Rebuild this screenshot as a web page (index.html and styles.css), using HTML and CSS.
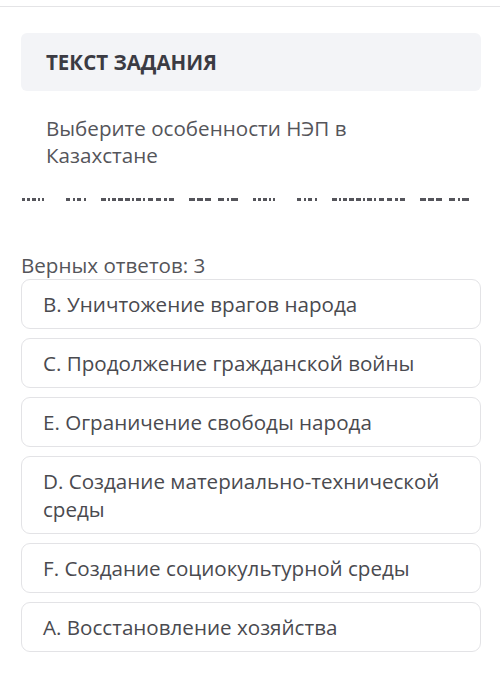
FILE: index.html
```html
<!DOCTYPE html>
<html>
<head>
  <meta charset="utf-8">
  <title>Текст задания</title>
  <link rel="stylesheet" href="styles.css">
</head>
<body>

<div class="topbar"></div>

<div class="container">
  <div class="task-head">
    <h2>ТЕКСТ ЗАДАНИЯ</h2>
  </div>

  <p class="question">Выберите особенности НЭП в Казахстане</p>

  <!-- hidden text shown as dashes -->
  <svg class="dashes" width="460" height="3" viewBox="0 0 460 3">
    <defs>
      <g id="dashgroup">
        <rect x="0" y="0" width="3" height="3"/><rect x="5" y="0" width="3" height="3"/>
        <rect x="10" y="0" width="4" height="3"/><rect x="16" y="0" width="2" height="3"/>
        <rect x="20" y="0" width="2" height="3"/>
        <rect x="44" y="0" width="4" height="3"/><rect x="51" y="0" width="2" height="3"/>
        <rect x="55" y="0" width="4" height="3"/><rect x="62" y="0" width="2" height="3"/>
        <rect x="79" y="0" width="5" height="3"/><rect x="86" y="0" width="2" height="3"/>
        <rect x="90" y="0" width="4" height="3"/><rect x="96" y="0" width="5" height="3"/>
        <rect x="103" y="0" width="5" height="3"/><rect x="110" y="0" width="2" height="3"/>
        <rect x="114" y="0" width="5" height="3"/><rect x="121" y="0" width="2" height="3"/>
        <rect x="126" y="0" width="5" height="3"/><rect x="134" y="0" width="5" height="3"/>
        <rect x="142" y="0" width="3" height="3"/><rect x="147" y="0" width="5" height="3"/>
        <rect x="167" y="0" width="6" height="3"/><rect x="175" y="0" width="6" height="3"/>
        <rect x="183" y="0" width="6" height="3"/>
        <rect x="196" y="0" width="6" height="3"/><rect x="205" y="0" width="2" height="3"/>
        <rect x="209" y="0" width="7" height="3"/>
      </g>
    </defs>
    <g fill="#55555b">
      <use href="#dashgroup" x="1"/>
      <use href="#dashgroup" x="232"/>
    </g>
  </svg>

  <div class="answers-label">Верных ответов: 3</div>

  <div class="answers">
    <div class="answer">B. Уничтожение врагов народа</div>
    <div class="answer">C. Продолжение гражданской войны</div>
    <div class="answer">E. Ограничение свободы народа</div>
    <div class="answer">D. Создание материально-технической среды</div>
    <div class="answer">F. Создание социокультурной среды</div>
    <div class="answer">A. Восстановление хозяйства</div>
  </div>
</div>

</body>
</html>
```

FILE: styles.css
```css
body {
  margin: 0;
  font-family: 'Open Sans', 'Noto Sans', sans-serif;
  background: #fff;
  color: #4a4a4f;
}

/* thin line at the top */
.topbar {
  height: 6px;
  border-bottom: 1px solid #e4e4e6;
}

.container {
  padding: 0 19px 0 21px;
}

/* Task header */
.task-head {
  margin-top: 26px;
  height: 58px;
  background: #f3f4f7;
  border-radius: 6px;
  display: flex;
  align-items: center;
  padding-left: 25px;
}

.task-head h2 {
  margin: 0;
  font-size: 20.5px;
  font-weight: 700;
  color: #3b3b43;
}

.question {
  margin: 24px 0 0;
  padding-left: 25px;
  padding-right: 110px;
  font-size: 20.6px;
  line-height: 27px;
  color: #55555a;
}

.dashes {
  display: block;
  margin: 29px 0 0 0;
}

.answers-label {
  margin-top: 51px;
  font-size: 20.6px;
  line-height: 27px;
  color: #55555a;
}

/* Answer options */
.answers {
  display: flex;
  flex-direction: column;
  gap: 9px;
}

.answer {
  border: 1px solid #e3e3e6;
  border-radius: 9px;
  padding: 10px 30px 10px 21px;
  font-size: 20.6px;
  line-height: 28px;
  color: #4a4a4f;
  background: #fff;
}
```
